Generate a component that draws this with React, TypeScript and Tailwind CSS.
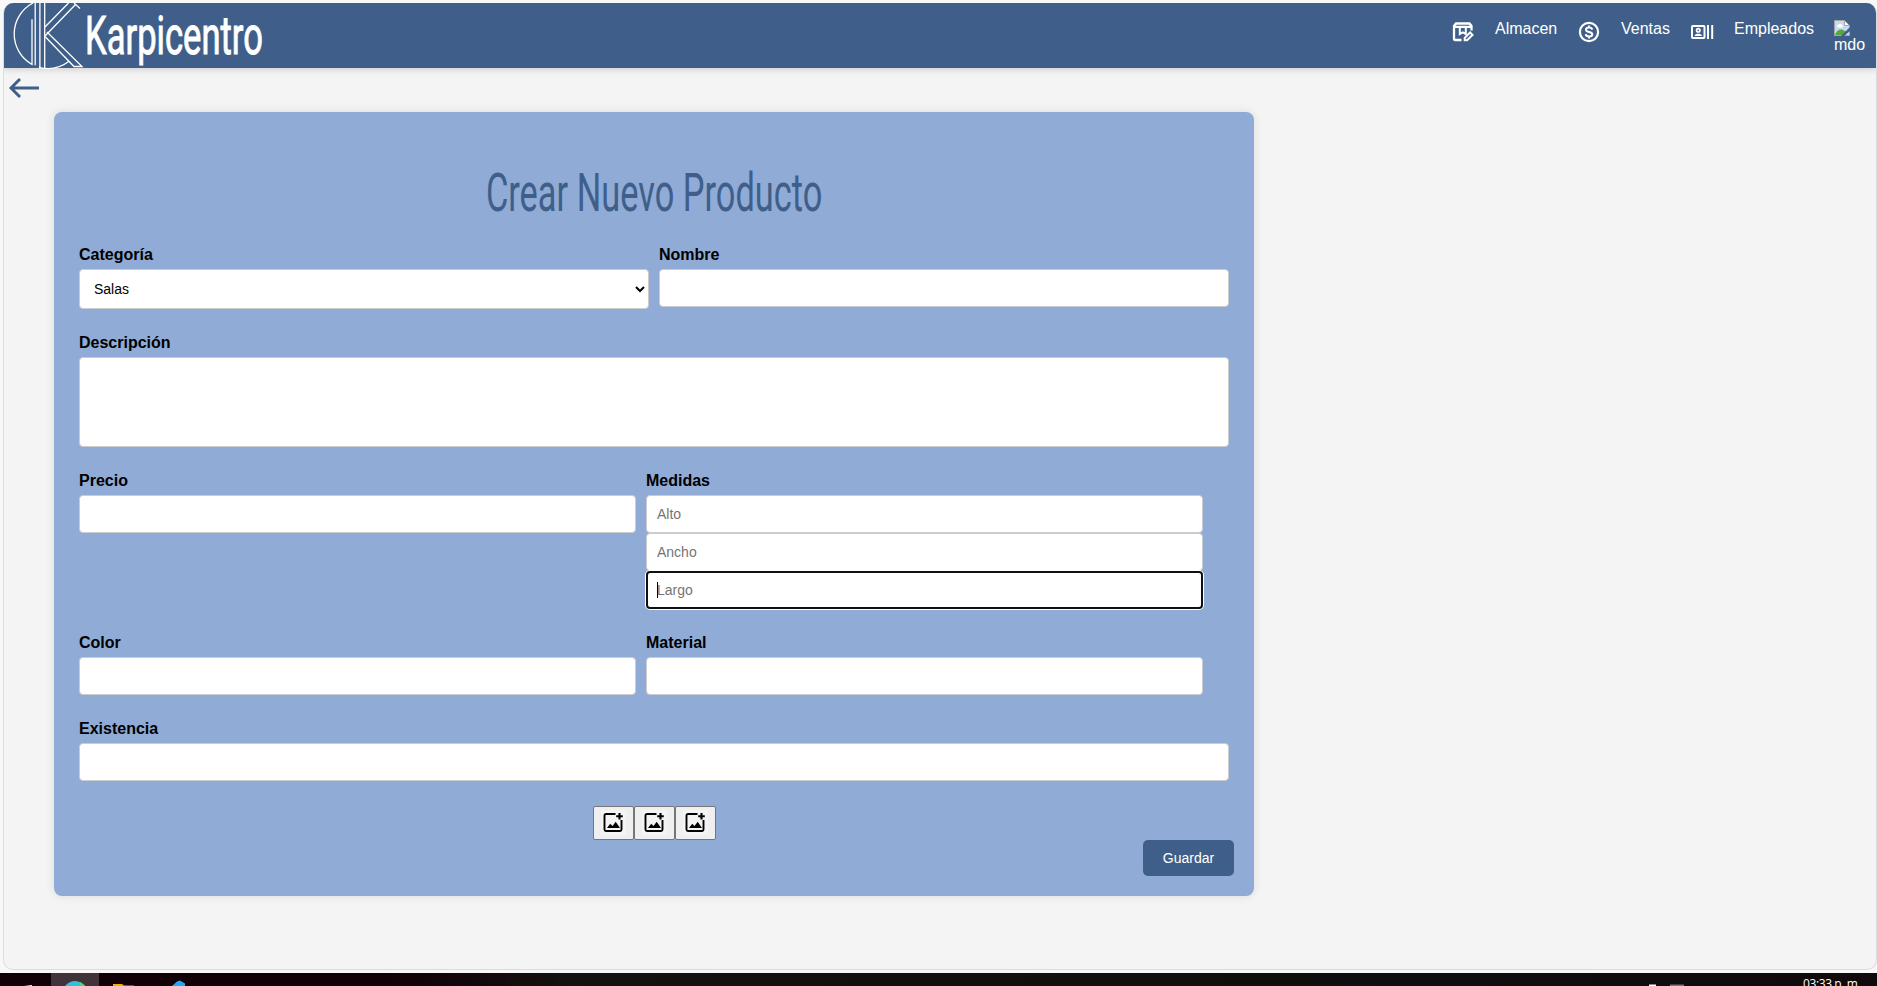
import React from 'react';

const inputClass =
  'block h-[38px] w-full rounded-[4px] border border-[#ccc] bg-white px-[10px] text-[14px] text-black placeholder:text-[#757575] outline-none';

function Field({ label, className, children }: { label: string; className: string; children: React.ReactNode }) {
  return (
    <div className={className}>
      <label className="mb-[5px] block h-[18px] text-[16px] leading-[18px] font-bold text-black">{label}</label>
      {children}
    </div>
  );
}

function Logo() {
  return (
    <svg className="block h-[67px] w-[72px]" viewBox="13 3 72 67" fill="none" stroke="#fff" strokeWidth="1.3">
      <path d="M34 3A35 35 0 0 0 33 64.5V19.3M36.2 3V65.3M40.9 3V67.6M45.7 3V68M40 67.4A35 35 0 0 0 70 61.3" />
      <path d="M46 27L69.5 3M46 36L77 4M75 3L81 8.5M46 36.5L75 66.5H83L48 32" />
    </svg>
  );
}

function BoxEditIcon() {
  return (
    <svg className="block h-6 w-6" viewBox="0 0 24 24" fill="none" stroke="#fff" strokeWidth="2.3">
      <path d="M10.5 20H4a1 1 0 0 1-1-1V6l2-2.500h13.500L20.500 6v4.500M3 6.800h17.500" />
      <path d="M8.800 7v7l3-1.600 3 1.600V7" strokeWidth="2" />
      <path d="M13.700 20.300v-2.400l5.400-5.400 2.400 2.400-5.400 5.400z" strokeWidth="2" />
    </svg>
  );
}

function CoinIcon() {
  return (
    <svg className="block h-6 w-6" viewBox="0 0 24 24" fill="none" stroke="#fff" strokeWidth="2.2">
      <circle cx="12" cy="12" r="9.1" />
      <path d="M15.2 9.600c-.3-1.300-1.500-2-3.200-2-1.900 0-3 .8-3 2.100 0 3 6.300 1.500 6.300 4.600 0 1.400-1.300 2.200-3.200 2.200s-3.200-.8-3.400-2.300M12 5.500v2.300M12 16.200v2.300" strokeWidth="2" />
    </svg>
  );
}

function StaffIcon() {
  return (
    <svg className="block h-6 w-6" viewBox="0 0 24 24" fill="none" stroke="#fff">
      <rect x="2" y="6" width="12.500" height="12" rx=".8" strokeWidth="2" />
      <path d="M18 5v14M22.200 5v14" strokeWidth="2" />
      <circle cx="8.250" cy="10.300" r="1.700" strokeWidth="1.700" />
      <path d="M4.500 16c.5-1.800 2-2.200 3.750-2.200s3.250.4 3.750 2.200z" fill="#fff" stroke="none" />
    </svg>
  );
}

function ImageAddIcon() {
  return (
    <svg className="block h-[25px] w-[25px] bg-[#f4f4f4]" viewBox="0 0 25 25" fill="none">
      <path d="M14.500 4H5a1.500 1.500 0 0 0-1.500 1.500v14A1.500 1.500 0 0 0 5 21h14a1.500 1.500 0 0 0 1.500-1.500V10" stroke="#000" strokeWidth="1.900" />
      <path d="M18.500 3v6.500M15.200 6.200h6.600" stroke="#000" strokeWidth="2.100" />
      <path d="M6 18l3.200-4.200 2.300 2.300 3.200-4.300L19 18z" fill="#000" />
    </svg>
  );
}

function BrokenImage() {
  return (
    <svg className="block h-4 w-4" viewBox="0 0 16 16">
      <path d="M.5.5h10l5 5v10H.5z" fill="#c6d9f7" stroke="#a5a5a5" />
      <path d="M3 6.500a1.500 1.500 0 0 1 1.500-2 2 2 0 0 1 3.500.500 1.300 1.300 0 0 1 0 2.500H4z" fill="#fff" />
      <path d="M1 15c1-4 4-6 7-5.500l4 2V15z" fill="#57a839" />
      <path d="M10.500.5v5h5z" fill="#fff" stroke="#a5a5a5" />
      <path d="M16 7l-9 9h3l6-5z" fill="#3f5f8a" />
    </svg>
  );
}

export default function App() {
  return (
    <div
      className="flex h-[986px] w-[1877px] flex-col overflow-hidden bg-[#f8f8f8]"
      style={{ fontFamily: '"Liberation Sans", Arial, sans-serif' }}
    >
      <div className="mt-[3px] ml-[3px] h-[967px] w-[1874px] shrink-0 overflow-hidden rounded-[10px] border border-t-0 border-[#dcdcdc] bg-[#f4f4f4]">
        <header className="flex h-[65px] items-start bg-[#3f5f8a] text-white shadow-[0_2px_6px_rgba(0,0,0,0.14)]">
          <div className="ml-[8px] w-[73px]">
            <Logo />
          </div>
          <div className="h-[65px] w-[200px]">
            <span
              className="block w-max origin-left scale-x-[0.64] text-[54px] leading-[65px] font-normal [-webkit-text-stroke:1px_#fff]"
              style={{ fontFamily: 'Roboto, sans-serif' }}
            >
              Karpicentro
            </span>
          </div>
          <nav className="mr-[1px] ml-auto flex items-start text-[16px] leading-[18px]">
            <div className="mt-[17px] w-[44px]"><BoxEditIcon /></div>
            <span className="mt-[17px] w-[82px]">Almacen</span>
            <div className="mt-[17px] w-[44px]"><CoinIcon /></div>
            <span className="mt-[17px] w-[69px]">Ventas</span>
            <div className="mt-[17px] w-[44px]"><StaffIcon /></div>
            <span className="mt-[17px] w-[100px]">Empleados</span>
            <div className="mt-[17px] w-[41px]">
              <BrokenImage />
              <span className="block leading-[17px]">mdo</span>
            </div>
          </nav>
        </header>

        <div className="h-[44px] pt-[8px] pl-[4px]">
          <svg className="block h-6 w-8" viewBox="0 0 32 24" fill="none" stroke="#3f5f8a" strokeWidth="2.9">
            <path d="M31 12H3M12 3L3 12l9 9" />
          </svg>
        </div>

        <main className="ml-[50px] h-[784px] w-[1200px] rounded-[8px] bg-[#8fabd6] px-[25px] pt-[49px] shadow-[0_0_10px_rgba(0,0,0,0.1)]">
          <h1 className="flex h-[85px] justify-center">
            <span
              className="block w-max shrink-0 scale-x-[0.637] text-[54px] leading-[64px] font-normal text-[#3f5f8a]"
              style={{ fontFamily: 'Roboto, sans-serif' }}
            >
              Crear Nuevo Producto
            </span>
          </h1>

          <div className="mb-[25px] flex h-[63px] gap-[10px]">
            <Field label="Categoría" className="w-[570px]">
              <div className="flex h-[40px] items-center justify-between rounded-[4px] border border-[#ccc] bg-white pr-[3px] pl-[14px] text-[14px]">
                <span>Salas</span>
                <svg className="h-[10px] w-[10px]" viewBox="0 0 10 10" fill="none" stroke="#000" strokeWidth="2">
                  <path d="M1 3l4 4 4-4" />
                </svg>
              </div>
            </Field>
            <Field label="Nombre" className="w-[570px]">
              <input className={inputClass} />
            </Field>
          </div>

          <Field label="Descripción" className="mb-[25px]">
            <textarea className="block h-[90px] w-full resize-none rounded-[4px] border border-[#ccc] bg-white outline-none" />
          </Field>

          <div className="mb-[25px] flex gap-[10px]">
            <Field label="Precio" className="w-[557px]">
              <input className={inputClass} />
            </Field>
            <Field label="Medidas" className="w-[557px]">
              <input className={inputClass} placeholder="Alto" />
              <input className={inputClass} placeholder="Ancho" />
              <div className="relative">
                <input
                  className="block h-[38px] w-full rounded-[4px] border-2 border-[#101010] bg-white px-[9px] text-[14px] shadow-[0_0_0_1px_#fff] outline-none placeholder:text-[#757575]"
                  placeholder="Largo"
                />
                <span className="absolute top-[11px] left-[11px] h-4 w-px bg-black" />
              </div>
            </Field>
          </div>

          <div className="mb-[25px] flex gap-[10px]">
            <Field label="Color" className="w-[557px]">
              <input className={inputClass} />
            </Field>
            <Field label="Material" className="w-[557px]">
              <input className={inputClass} />
            </Field>
          </div>

          <Field label="Existencia" className="mb-[25px]">
            <input className={inputClass} />
          </Field>

          <div className="flex h-[34px] justify-center">
            {[0, 1, 2].map((i) => (
              <button
                key={i}
                className="flex h-[34px] w-[41px] items-center justify-center rounded-[2px] border border-[#767676] bg-[#efefef] pb-[2px]"
              >
                <ImageAddIcon />
              </button>
            ))}
          </div>
          <div className="-mr-[5px] flex justify-end">
            <button className="h-[36px] w-[91px] rounded-[5px] bg-[#3f5f8a] text-[14px] text-white">Guardar</button>
          </div>
        </main>
      </div>

      <footer className="mt-[3px] flex h-[13px] shrink-0 overflow-hidden bg-linear-to-r from-[#110006] from-20% via-[#14110f] via-30% to-[#100a0c]">
        <svg className="block h-[13px] w-[500px] shrink-0" viewBox="0 0 500 13">
          <path d="M51 0h48v13H51z" fill="#40343a" />
          <path d="M24 13l8-1v1z" fill="#fff" />
          <circle cx="75" cy="20" r="12" fill="#2fc3d4" />
          <path d="M80 9a12 12 0 0 1 6 5h-6z" fill="#4fd28a" />
          <path d="M113 11h9l2 1.500h10v1h-21z" fill="#f0b000" />
          <path d="M172 13l5-4.500 3-1 5 3V13z" fill="#22a7f2" />
        </svg>
        <svg className="mt-auto ml-auto block h-[2px] w-[50px] shrink-0" viewBox="0 0 50 2">
          <path d="M7 .5h7V2H7z" fill="#fff" />
          <path d="M28 .5h14V2H28z" fill="#777" />
        </svg>
        <span
          className="mt-[3px] mr-[20px] ml-[111px] h-[16px] w-[54px] shrink-0 text-[12px] leading-[16px] tracking-[-0.4px] whitespace-nowrap text-white"
          style={{ fontFamily: '"Open Sans", "Noto Sans", sans-serif' }}
        >
          03:33 p. m.
        </span>
      </footer>
    </div>
  );
}
